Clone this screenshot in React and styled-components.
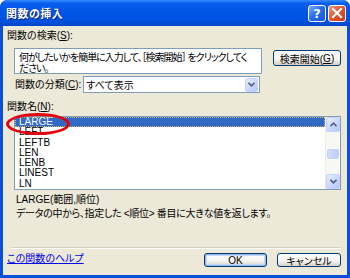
import React from "react";
import styled, { createGlobalStyle } from "styled-components";

const FONT = `"Liberation Sans", "Noto Sans CJK JP", sans-serif`;

const functions = ["LARGE", "LEFT", "LEFTB", "LEN", "LENB", "LINEST", "LN"];

const App = () => {
  return (
    <>
      <GlobalStyle />
      <Window>
        <TitleBar>
          <Title>関数の挿入</Title>
          <TitleButtons>
            <CaptionButton>?</CaptionButton>
            <CaptionButton $close>
              <svg width="12" height="12" viewBox="0 0 12 12">
                <path d="M2 2 L10 10 M10 2 L2 10" stroke="#fff" strokeWidth="2.2" strokeLinecap="square" />
              </svg>
            </CaptionButton>
          </TitleButtons>
        </TitleBar>

        <Body>
          <Label>
            関数の検索(<u>S</u>):
          </Label>
          <SearchRow>
            <SearchBox>
              何がしたいかを簡単に入力して、［検索開始］ をクリックしてく
              <br />
              ださい。
            </SearchBox>
            <Button $width={68} $height={16}>
              検索開始(<u>G</u>)
            </Button>
          </SearchRow>

          <CategoryRow>
            <Label>
              関数の分類(<u>C</u>):
            </Label>
            <Select>
              <span>すべて表示</span>
              <ArrowButton $size={14}>
                <Chevron />
              </ArrowButton>
            </Select>
          </CategoryRow>

          <Label $top={8}>
            関数名(<u>N</u>):
          </Label>
          <ListBox>
            <ListItems>
              {functions.map((name, i) => (
                <ListItem key={name} $selected={i === 0}>
                  {name}
                </ListItem>
              ))}
            </ListItems>
            <ScrollBar>
              <ArrowButton $size={15}>
                <Chevron up />
              </ArrowButton>
              <Track>
                <Thumb />
              </Track>
              <ArrowButton $size={15}>
                <Chevron />
              </ArrowButton>
            </ScrollBar>
            <Marker />
          </ListBox>

          <Signature>LARGE(範囲,順位)</Signature>
          <Description>データの中から、指定した &lt;順位&gt; 番目に大きな値を返します。</Description>

          <Separator />

          <Footer>
            <HelpLink>この関数のヘルプ</HelpLink>
            <Buttons>
              <Button $width={63} $height={14} $default>
                OK
              </Button>
              <Button $width={64} $height={14}>
                キャンセル
              </Button>
            </Buttons>
          </Footer>
        </Body>
      </Window>
    </>
  );
};

const Chevron = ({ up }) => (
  <svg width="7" height="5" viewBox="0 0 7 5">
    <path
      d={up ? "M0.5 4.2 L3.5 1.2 L6.5 4.2" : "M0.5 0.8 L3.5 3.8 L6.5 0.8"}
      fill="none"
      stroke="#4d6185"
      strokeWidth="1.6"
    />
  </svg>
);

// ===== Styled Components =====

const GlobalStyle = createGlobalStyle`
  html, body {
    margin: 0;
    padding: 0;
    background: #fff;
  }
  body {
    font-family: ${FONT};
    font-feature-settings: "palt";
  }
`;

const Window = styled.div`
  width: 350px;
  height: 278px;
  display: flex;
  flex-direction: column;
  box-sizing: border-box;
  padding: 0 3px 3px 3px;
  border-radius: 7px 7px 0 0;
  background: #0a4fd8;
  overflow: hidden;
`;

const TitleBar = styled.div`
  height: 26px;
  flex: none;
  display: flex;
  align-items: center;
  justify-content: space-between;
  margin: 0 -3px;
  padding: 0 4px 0 6px;
  border-radius: 7px 7px 0 0;
  background: linear-gradient(
    to bottom,
    #3a8cff 0%,
    #0a5ff0 12%,
    #0055e5 45%,
    #0053e0 80%,
    #0046c8 100%
  );
`;

const Title = styled.span`
  color: #fff;
  font-size: 11px;
  font-weight: bold;
  letter-spacing: 0.5px;
  text-shadow: 1px 1px 0 #0a1e78;
`;

const TitleButtons = styled.div`
  display: flex;
  gap: 2px;
`;

const CaptionButton = styled.div`
  width: 18px;
  height: 17px;
  box-sizing: border-box;
  border: 1px solid #fff;
  border-radius: 3px;
  display: flex;
  align-items: center;
  justify-content: center;
  color: #fff;
  font-family: "DejaVu Sans", sans-serif;
  font-weight: bold;
  font-size: 13px;
  background: ${(p) =>
    p.$close
      ? "linear-gradient(135deg, #f09a7c 0%, #e4572f 45%, #c7391a 100%)"
      : "linear-gradient(135deg, #7fb0ff 0%, #2a6ff0 45%, #1454d8 100%)"};
`;

const Body = styled.div`
  flex: 1;
  background: #ece9d8;
  display: flex;
  flex-direction: column;
  padding: 4px 6px 0 4px;
  font-size: 10px;
  color: #000;
`;

const Label = styled.div`
  font-size: 10px;
  line-height: 12px;
  margin-top: ${(p) => p.$top || 0}px;
  white-space: nowrap;

  u {
    text-decoration: underline;
    text-underline-offset: 1px;
  }
`;

const SearchRow = styled.div`
  display: flex;
  align-items: flex-start;
  margin-top: 6px;
  padding-left: 7px;
`;

const SearchBox = styled.div`
  width: 248px;
  height: 26px;
  box-sizing: border-box;
  border: 1px solid #7f9db9;
  background: #fff;
  padding: 3px 0 0 4px;
  font-size: 10px;
  line-height: 11px;
  letter-spacing: -1px;
  white-space: nowrap;
  overflow: hidden;
`;

const Button = styled.div`
  width: ${(p) => p.$width}px;
  height: ${(p) => p.$height}px;
  box-sizing: border-box;
  margin-left: auto;
  margin-top: 2px;
  border: 1px solid #003c74;
  border-radius: 3px;
  display: flex;
  align-items: center;
  justify-content: center;
  font-size: 10px;
  white-space: nowrap;
  background: linear-gradient(to bottom, #ffffff 0%, #f3f3ef 60%, #d6d0c5 100%);
  box-shadow: ${(p) =>
    p.$default ? "inset 0 0 0 1px #98b8ea, inset 0 0 0 2px #c4d8f5" : "none"};

  u {
    text-underline-offset: 1px;
  }
`;

const CategoryRow = styled.div`
  display: flex;
  align-items: center;
  margin-top: 2px;
  padding-left: 8px;
  gap: 2px;
`;

const Select = styled.div`
  width: 177px;
  height: 17px;
  box-sizing: border-box;
  border: 1px solid #7f9db9;
  background: #fff;
  display: flex;
  align-items: center;
  justify-content: space-between;
  padding: 0 1px 0 2px;
  font-size: 10px;
`;

const ArrowButton = styled.div`
  width: ${(p) => p.$size - 1}px;
  height: ${(p) => p.$size}px;
  box-sizing: border-box;
  border: 1px solid #c3d3fd;
  border-radius: 2px;
  background: linear-gradient(135deg, #e6eeff 0%, #c6d6fc 60%, #b4c8f6 100%);
  display: flex;
  align-items: center;
  justify-content: center;
  flex: none;
`;

const ListBox = styled.div`
  position: relative;
  width: 327px;
  height: 74px;
  box-sizing: border-box;
  margin: 3px 0 0 7px;
  border: 1px solid #7f9db9;
  background: #fff;
  display: flex;
`;

const ListItems = styled.div`
  flex: 1;
  overflow: hidden;
`;

const ListItem = styled.div`
  height: 10.3px;
  line-height: 10.3px;
  padding-left: 4px;
  font-size: 10px;
  color: ${(p) => (p.$selected ? "#fff" : "#000")};
  background: ${(p) => (p.$selected ? "#316ac5" : "transparent")};
  outline: ${(p) => (p.$selected ? "1px dotted #c8b870" : "none")};
  outline-offset: -1px;
`;

const ScrollBar = styled.div`
  width: 14px;
  display: flex;
  flex-direction: column;
  background: #f7f7f4;
  border-left: 1px solid #eeede5;
`;

const Track = styled.div`
  flex: 1;
  position: relative;
`;

const Thumb = styled.div`
  position: absolute;
  left: 1px;
  right: 1px;
  top: 17px;
  height: 8px;
  border-radius: 2px;
  border: 1px solid #c3d3fd;
  background: linear-gradient(to right, #cfdcfd, #bccffb);
`;

const Marker = styled.div`
  position: absolute;
  left: -9px;
  top: -4px;
  width: 58px;
  height: 16px;
  border: 3px solid #e3000f;
  border-radius: 50%;
  pointer-events: none;
`;

const Signature = styled.div`
  margin: 4px 0 0 9px;
  font-size: 10px;
  line-height: 12px;
  white-space: nowrap;
`;

const Description = styled.div`
  margin: 2px 0 0 9px;
  font-size: 10px;
  line-height: 12px;
  letter-spacing: -0.3px;
  white-space: nowrap;
`;

const Separator = styled.div`
  margin: 27px 0 0 4px;
  height: 0;
  border-top: 1px solid #d5d2c3;
  border-bottom: 1px solid #fbfaf6;
`;

const Footer = styled.div`
  display: flex;
  align-items: center;
  justify-content: space-between;
  margin-top: 4px;
`;

const HelpLink = styled.a`
  color: #0000ee;
  text-decoration: underline;
  font-size: 10px;
  line-height: 12px;
  align-self: flex-start;
  cursor: pointer;
`;

const Buttons = styled.div`
  display: flex;
  gap: 10px;

  & > div {
    margin: 0;
  }
`;

export default App;
